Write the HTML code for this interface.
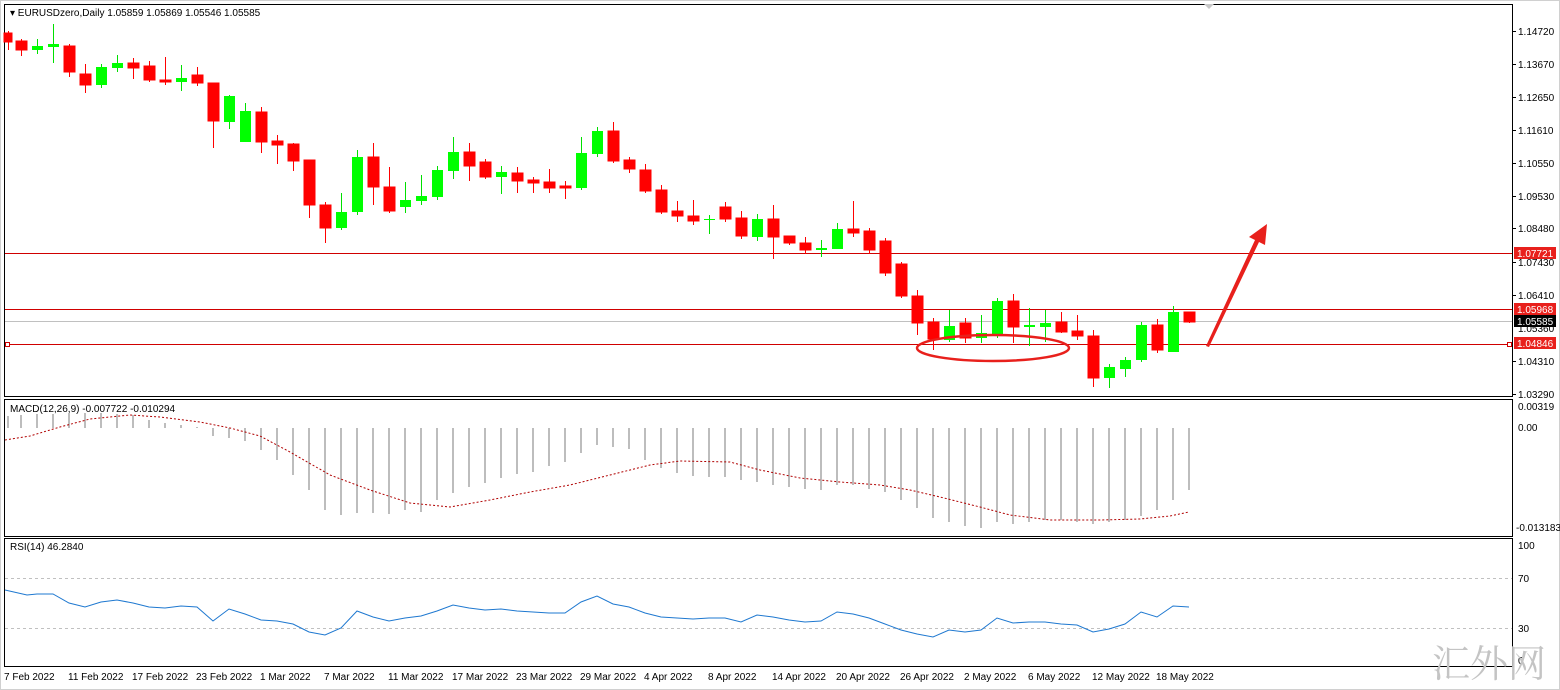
<!DOCTYPE html>
<html><head><meta charset="utf-8"><style>
html,body{margin:0;padding:0;background:#fff;}
svg{display:block;font-family:"Liberation Sans",Tahoma,sans-serif;font-size:10px;}
</style></head><body>
<svg width="1560" height="690" viewBox="0 0 1560 690" xmlns="http://www.w3.org/2000/svg">
<rect x="0.5" y="0.5" width="1559" height="689" fill="#fff" stroke="#d0d0d0"/>
<!-- pane borders -->
<g fill="none" stroke="#000" stroke-width="1">
<rect x="4.5" y="4.5" width="1508" height="392"/>
<rect x="4.5" y="399.5" width="1508" height="137"/>
<rect x="4.5" y="538.5" width="1508" height="128"/>
</g>
<polygon points="1204,4 1214,4 1209,9" fill="#c8c8c8"/>
<text x="10" y="16" fill="#000">▾ EURUSDzero,Daily  1.05859 1.05869 1.05546 1.05585</text>
<!-- horizontal lines -->
<g stroke-width="1">
<line x1="5" x2="1512" y1="253.5" y2="253.5" stroke="#d00000"/>
<line x1="5" x2="1512" y1="309.5" y2="309.5" stroke="#d00000"/>
<line x1="5" x2="1512" y1="321.5" y2="321.5" stroke="#c0c0c0"/>
<line x1="5" x2="1512" y1="344.5" y2="344.5" stroke="#d00000"/>
</g>
<rect x="5.5" y="342.5" width="4" height="4" fill="#fff" stroke="#d00000"/>
<rect x="1507.5" y="342.5" width="4" height="4" fill="#fff" stroke="#d00000"/>
<!-- candles -->
<g id="c"></g>
<g stroke-width="1">
<g stroke="#ff0000" fill="#ff0000">
<line x1="8.5" x2="8.5" y1="31" y2="50"/><rect x="4" y="33" width="8" height="9"/>
<line x1="21.5" x2="21.5" y1="39" y2="56"/><rect x="16" y="41" width="11" height="9"/>
<line x1="69.5" x2="69.5" y1="44" y2="77"/><rect x="64" y="46" width="11" height="26"/>
<line x1="85.5" x2="85.5" y1="64" y2="93"/><rect x="80" y="74" width="11" height="11"/>
<line x1="133.5" x2="133.5" y1="58" y2="79"/><rect x="128" y="63" width="11" height="5"/>
<line x1="149.5" x2="149.5" y1="61" y2="82"/><rect x="144" y="66" width="11" height="14"/>
<line x1="165.5" x2="165.5" y1="57" y2="85"/><rect x="160" y="80" width="11" height="2"/>
<line x1="197.5" x2="197.5" y1="67" y2="86"/><rect x="192" y="75" width="11" height="8"/>
<line x1="213.5" x2="213.5" y1="83" y2="148"/><rect x="208" y="83" width="11" height="38"/>
<line x1="261.5" x2="261.5" y1="107" y2="153"/><rect x="256" y="112" width="11" height="30"/>
<line x1="277.5" x2="277.5" y1="135" y2="164"/><rect x="272" y="141" width="11" height="4"/>
<line x1="293.5" x2="293.5" y1="143" y2="171"/><rect x="288" y="144" width="11" height="17"/>
<line x1="309.5" x2="309.5" y1="160" y2="218"/><rect x="304" y="160" width="11" height="45"/>
<line x1="325.5" x2="325.5" y1="202" y2="243"/><rect x="320" y="205" width="11" height="23"/>
<line x1="373.5" x2="373.5" y1="143" y2="205"/><rect x="368" y="157" width="11" height="30"/>
<line x1="389.5" x2="389.5" y1="167" y2="213"/><rect x="384" y="187" width="11" height="24"/>
<line x1="469.5" x2="469.5" y1="143" y2="181"/><rect x="464" y="152" width="11" height="14"/>
<line x1="485.5" x2="485.5" y1="159" y2="179"/><rect x="480" y="162" width="11" height="15"/>
<line x1="517.5" x2="517.5" y1="167" y2="193"/><rect x="512" y="173" width="11" height="8"/>
<line x1="533.5" x2="533.5" y1="177" y2="193"/><rect x="528" y="180" width="11" height="3"/>
<line x1="549.5" x2="549.5" y1="169" y2="193"/><rect x="544" y="182" width="11" height="6"/>
<line x1="565.5" x2="565.5" y1="181" y2="199"/><rect x="560" y="186" width="11" height="2"/>
<line x1="613.5" x2="613.5" y1="122" y2="163"/><rect x="608" y="131" width="11" height="30"/>
<line x1="629.5" x2="629.5" y1="157" y2="173"/><rect x="624" y="160" width="11" height="9"/>
<line x1="645.5" x2="645.5" y1="164" y2="193"/><rect x="640" y="170" width="11" height="21"/>
<line x1="661.5" x2="661.5" y1="185" y2="214"/><rect x="656" y="190" width="11" height="22"/>
<line x1="677.5" x2="677.5" y1="201" y2="222"/><rect x="672" y="211" width="11" height="5"/>
<line x1="693.5" x2="693.5" y1="200" y2="225"/><rect x="688" y="216" width="11" height="5"/>
<line x1="725.5" x2="725.5" y1="202" y2="222"/><rect x="720" y="207" width="11" height="12"/>
<line x1="741.5" x2="741.5" y1="211" y2="239"/><rect x="736" y="218" width="11" height="18"/>
<line x1="773.5" x2="773.5" y1="205" y2="259"/><rect x="768" y="219" width="11" height="18"/>
<line x1="789.5" x2="789.5" y1="236" y2="245"/><rect x="784" y="236" width="11" height="7"/>
<line x1="805.5" x2="805.5" y1="237" y2="254"/><rect x="800" y="243" width="11" height="7"/>
<line x1="853.5" x2="853.5" y1="201" y2="237"/><rect x="848" y="229" width="11" height="4"/>
<line x1="869.5" x2="869.5" y1="228" y2="254"/><rect x="864" y="231" width="11" height="19"/>
<line x1="885.5" x2="885.5" y1="238" y2="276"/><rect x="880" y="241" width="11" height="32"/>
<line x1="901.5" x2="901.5" y1="262" y2="298"/><rect x="896" y="264" width="11" height="32"/>
<line x1="917.5" x2="917.5" y1="290" y2="335"/><rect x="912" y="296" width="11" height="27"/>
<line x1="933.5" x2="933.5" y1="318" y2="350"/><rect x="928" y="322" width="11" height="17"/>
<line x1="965.5" x2="965.5" y1="318" y2="343"/><rect x="960" y="323" width="11" height="15"/>
<line x1="1013.5" x2="1013.5" y1="294" y2="343"/><rect x="1008" y="301" width="11" height="26"/>
<line x1="1061.5" x2="1061.5" y1="312" y2="333"/><rect x="1056" y="322" width="11" height="10"/>
<line x1="1077.5" x2="1077.5" y1="315" y2="340"/><rect x="1072" y="331" width="11" height="5"/>
<line x1="1093.5" x2="1093.5" y1="330" y2="387"/><rect x="1088" y="336" width="11" height="42"/>
<line x1="1157.5" x2="1157.5" y1="319" y2="353"/><rect x="1152" y="325" width="11" height="25"/>
<line x1="1189.5" x2="1189.5" y1="312" y2="323"/><rect x="1184" y="312" width="11" height="10"/>
</g>
<g stroke="#00e000" fill="#00ff00">
<line x1="37.5" x2="37.5" y1="39" y2="54"/><rect x="32" y="46" width="11" height="4" stroke="none"/>
<line x1="53.5" x2="53.5" y1="24" y2="63"/><rect x="48" y="44" width="11" height="3" stroke="none"/>
<line x1="101.5" x2="101.5" y1="64" y2="88"/><rect x="96" y="67" width="11" height="18" stroke="none"/>
<line x1="117.5" x2="117.5" y1="55" y2="72"/><rect x="112" y="63" width="11" height="5" stroke="none"/>
<line x1="181.5" x2="181.5" y1="65" y2="91"/><rect x="176" y="78" width="11" height="4" stroke="none"/>
<line x1="229.5" x2="229.5" y1="95" y2="129"/><rect x="224" y="96" width="11" height="26" stroke="none"/>
<line x1="245.5" x2="245.5" y1="103" y2="142"/><rect x="240" y="111" width="11" height="31" stroke="none"/>
<line x1="341.5" x2="341.5" y1="193" y2="230"/><rect x="336" y="212" width="11" height="16" stroke="none"/>
<line x1="357.5" x2="357.5" y1="150" y2="215"/><rect x="352" y="157" width="11" height="55" stroke="none"/>
<line x1="405.5" x2="405.5" y1="182" y2="213"/><rect x="400" y="200" width="11" height="7" stroke="none"/>
<line x1="421.5" x2="421.5" y1="175" y2="205"/><rect x="416" y="196" width="11" height="5" stroke="none"/>
<line x1="437.5" x2="437.5" y1="166" y2="200"/><rect x="432" y="170" width="11" height="27" stroke="none"/>
<line x1="453.5" x2="453.5" y1="137" y2="179"/><rect x="448" y="152" width="11" height="19" stroke="none"/>
<line x1="501.5" x2="501.5" y1="166" y2="194"/><rect x="496" y="172" width="11" height="5" stroke="none"/>
<line x1="581.5" x2="581.5" y1="137" y2="190"/><rect x="576" y="153" width="11" height="35" stroke="none"/>
<line x1="597.5" x2="597.5" y1="127" y2="157"/><rect x="592" y="131" width="11" height="23" stroke="none"/>
<line x1="709.5" x2="709.5" y1="215" y2="234"/><rect x="704" y="219" width="11" height="1" stroke="none"/>
<line x1="757.5" x2="757.5" y1="214" y2="241"/><rect x="752" y="219" width="11" height="18" stroke="none"/>
<line x1="821.5" x2="821.5" y1="240" y2="257"/><rect x="816" y="248" width="11" height="2" stroke="none"/>
<line x1="837.5" x2="837.5" y1="223" y2="249"/><rect x="832" y="229" width="11" height="20" stroke="none"/>
<line x1="949.5" x2="949.5" y1="310" y2="342"/><rect x="944" y="326" width="11" height="14" stroke="none"/>
<line x1="981.5" x2="981.5" y1="315" y2="343"/><rect x="976" y="333" width="11" height="5" stroke="none"/>
<line x1="997.5" x2="997.5" y1="298" y2="338"/><rect x="992" y="301" width="11" height="33" stroke="none"/>
<line x1="1029.5" x2="1029.5" y1="308" y2="346"/><rect x="1024" y="325" width="11" height="2" stroke="none"/>
<line x1="1045.5" x2="1045.5" y1="310" y2="342"/><rect x="1040" y="323" width="11" height="4" stroke="none"/>
<line x1="1109.5" x2="1109.5" y1="364" y2="388"/><rect x="1104" y="367" width="11" height="11" stroke="none"/>
<line x1="1125.5" x2="1125.5" y1="357" y2="377"/><rect x="1120" y="360" width="11" height="9" stroke="none"/>
<line x1="1141.5" x2="1141.5" y1="322" y2="362"/><rect x="1136" y="325" width="11" height="35" stroke="none"/>
<line x1="1173.5" x2="1173.5" y1="306" y2="352"/><rect x="1168" y="312" width="11" height="40" stroke="none"/>
</g>
</g>
<!-- ellipse & arrow -->
<ellipse cx="993" cy="348" rx="76" ry="13" fill="none" stroke="#e8201c" stroke-width="2.5"/>
<polygon points="1206,346 1255,240 1249,237 1267,224 1265,245 1259,242 1209,347" fill="#e8201c"/>
<!-- right axis labels main -->
<g fill="#000">
<text x="1518" y="35">1.14720</text>
<text x="1518" y="68">1.13670</text>
<text x="1518" y="101">1.12650</text>
<text x="1518" y="134">1.11610</text>
<text x="1518" y="167">1.10550</text>
<text x="1518" y="200">1.09530</text>
<text x="1518" y="232">1.08480</text>
<text x="1518" y="266">1.07430</text>
<text x="1518" y="299">1.06410</text>
<text x="1518" y="332">1.05360</text>
<text x="1518" y="365">1.04310</text>
<text x="1518" y="398">1.03290</text>
</g>
<g stroke="#000"><line x1="1512" x2="1516" y1="31.5" y2="31.5"/><line x1="1512" x2="1516" y1="64.5" y2="64.5"/><line x1="1512" x2="1516" y1="97.5" y2="97.5"/><line x1="1512" x2="1516" y1="130.5" y2="130.5"/><line x1="1512" x2="1516" y1="163.5" y2="163.5"/><line x1="1512" x2="1516" y1="196.5" y2="196.5"/><line x1="1512" x2="1516" y1="228.5" y2="228.5"/><line x1="1512" x2="1516" y1="262.5" y2="262.5"/><line x1="1512" x2="1516" y1="295.5" y2="295.5"/><line x1="1512" x2="1516" y1="361.5" y2="361.5"/><line x1="1512" x2="1516" y1="394.5" y2="394.5"/></g>
<rect x="1514" y="247" width="42" height="12" fill="#e8201c"/><text x="1517" y="257" fill="#fff">1.07721</text>
<rect x="1514" y="303" width="42" height="12" fill="#e8201c"/><text x="1517" y="313" fill="#fff">1.05968</text>
<rect x="1514" y="315" width="42" height="12" fill="#000"/><text x="1517" y="325" fill="#fff">1.05585</text>
<rect x="1514" y="337" width="42" height="12" fill="#e8201c"/><text x="1517" y="347" fill="#fff">1.04846</text>
<!-- MACD -->
<text x="10" y="412" fill="#000">MACD(12,26,9) -0.007722 -0.010294</text>
<text x="1518" y="410">0.00319</text>
<text x="1518" y="431">0.00</text>
<text x="1516" y="531">-0.013183</text>
<g stroke="#bdbdbd" stroke-width="2">
<path d="M8 428V416M21 428V415M37 428V414M53 428V414M69 428V413M85 428V413M101 428V413M117 428V414M133 428V415M149 428V420M165 428V423M181 428V425M197 428V427M213 428V436M229 428V438M245 428V441M261 428V450M277 428V460M293 428V475M309 428V490M325 428V510M341 428V515M357 428V513M373 428V513M389 428V514M405 428V510M421 428V512M437 428V500M453 428V493M469 428V487M485 428V483M501 428V478M517 428V474M533 428V472M549 428V466M565 428V462M581 428V453M597 428V445M613 428V447M629 428V449M645 428V460M661 428V468M677 428V473M693 428V476M709 428V477M725 428V477M741 428V480M757 428V482M773 428V485M789 428V487M805 428V489M821 428V490M837 428V485M853 428V485M869 428V489M885 428V492M901 428V500M917 428V508M933 428V518M949 428V522M965 428V526M981 428V528M997 428V522M1013 428V524M1029 428V522M1045 428V520M1061 428V520M1077 428V522M1093 428V524M1109 428V522M1125 428V520M1141 428V516M1157 428V510M1173 428V500M1189 428V490"/>
</g>
<polyline fill="none" stroke="#b00000" stroke-width="1" stroke-dasharray="2,2" points="5,440 30,436 60,427 90,419 130,415 160,417 200,422 230,428 260,436 290,452 330,475 370,490 410,503 450,507 490,500 530,492 570,485 610,475 650,465 680,461 730,462 760,470 800,478 840,482 880,485 910,490 940,497 980,507 1010,515 1050,520 1100,520 1140,519 1170,516 1189,512"/>
<!-- RSI -->
<text x="10" y="550" fill="#000">RSI(14) 46.2840</text>
<text x="1518" y="549">100</text>
<text x="1518" y="582">70</text>
<text x="1518" y="632">30</text>
<text x="1518" y="664">0</text>
<g stroke="#c0c0c0" stroke-dasharray="3,3"><line x1="5" x2="1512" y1="578.5" y2="578.5"/><line x1="5" x2="1512" y1="628.5" y2="628.5"/></g>
<polyline fill="none" stroke="#1e78d0" stroke-width="1" points="5,590 27,595 37,594 53,594 69,603 85,607 101,602 117,600 133,603 149,607 165,608 181,606 197,607 213,621 229,609 245,614 261,620 277,621 293,624 309,632 325,635 341,628 357,611 373,617 389,621 405,618 421,616 437,611 453,605 469,608 485,610 501,609 517,611 533,612 549,613 565,613 581,602 597,596 613,604 629,607 645,613 661,617 677,618 693,619 709,618 725,618 741,622 757,615 773,617 789,620 805,622 821,621 837,612 853,614 869,618 885,624 901,630 917,634 933,637 949,630 965,632 981,630 997,618 1013,623 1029,622 1045,622 1061,624 1077,625 1093,632 1109,629 1125,624 1141,612 1157,617 1173,606 1189,607"/>
<!-- dates -->
<g fill="#000">
<text x="4" y="680">7 Feb 2022</text><text x="68" y="680">11 Feb 2022</text><text x="132" y="680">17 Feb 2022</text><text x="196" y="680">23 Feb 2022</text><text x="260" y="680">1 Mar 2022</text><text x="324" y="680">7 Mar 2022</text><text x="388" y="680">11 Mar 2022</text><text x="452" y="680">17 Mar 2022</text><text x="516" y="680">23 Mar 2022</text><text x="580" y="680">29 Mar 2022</text><text x="644" y="680">4 Apr 2022</text><text x="708" y="680">8 Apr 2022</text><text x="772" y="680">14 Apr 2022</text><text x="836" y="680">20 Apr 2022</text><text x="900" y="680">26 Apr 2022</text><text x="964" y="680">2 May 2022</text><text x="1028" y="680">6 May 2022</text><text x="1092" y="680">12 May 2022</text><text x="1156" y="680">18 May 2022</text>
</g>
<text x="1432" y="677" font-family="'Noto Serif CJK SC','Liberation Serif',serif" font-size="38" fill="#c4c4c4">汇外网</text>
</svg>
</body></html>
